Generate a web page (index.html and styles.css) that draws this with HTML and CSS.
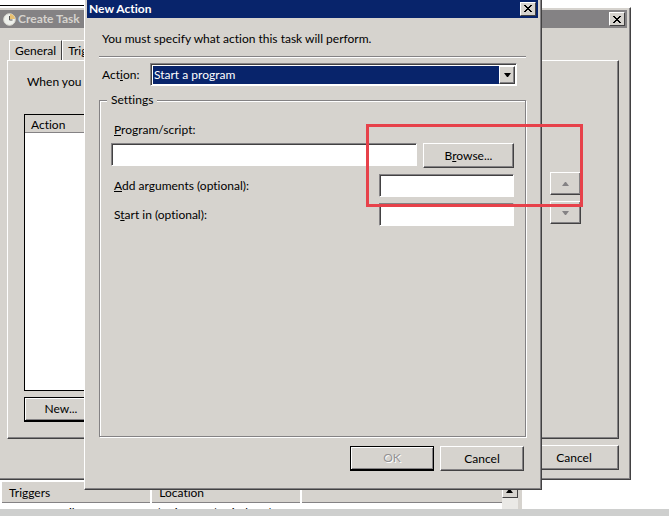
FILE: index.html
```html
<!DOCTYPE html>
<html lang="en">
<head>
    <meta charset="UTF-8">
    <meta name="viewport" content="width=device-width, initial-scale=1.0">
    <title>Create Task</title>
    <link rel="stylesheet" href="styles.css">
</head>
<body>
    <div class="desktop">
        <div class="top-line"></div>

        <!-- Task library list under the windows -->
        <div class="library">
            <table class="task-table">
                <thead>
                    <tr><th>Triggers</th><th>Location</th><th></th></tr>
                </thead>
                <tbody>
                    <tr><td>Consumer files</td><td>\Microsoft\Windows\Power</td><td></td></tr>
                </tbody>
            </table>
            <div class="scrollbar">
                <button class="scroll-up" type="button" aria-label="Scroll up">
                    <svg width="7" height="4" viewBox="0 0 7 4"><path d="M3 0h1l3 4H0z"/></svg>
                </button>
            </div>
        </div>
        <div class="status"></div>

        <!-- Create Task window -->
        <section class="window task-window">
            <header class="titlebar inactive">
                <svg class="clock" width="13" height="13" viewBox="0 0 13 13">
                    <circle cx="6.5" cy="6.5" r="5.8" fill="#eef0ec" stroke="#d8d8d0"/>
                    <path d="M7 6V1A5 5 0 0 1 12 6z" fill="#e8c070"/>
                    <path d="M6.5 3v4h3" fill="none" stroke="#555"/>
                </svg>
                <h1>Create Task</h1>
                <button class="close" type="button" aria-label="Close">
                    <svg width="8" height="7" viewBox="0 0 8 7"><path d="M0 0l7 7M1 0l7 7M7 0l-7 7M8 0l-7 7" stroke="#000"/></svg>
                </button>
            </header>
            <nav class="tabs">
                <button class="tab" type="button">General</button>
                <button class="tab" type="button">Triggers</button>
            </nav>
            <div class="panel">
                <p>When you create a task, you must specify the action.</p>
                <div class="panel-row">
                    <div class="action-list">
                        <div class="action-head">Action</div>
                    </div>
                    <div class="movers">
                        <button class="btn mover" type="button" aria-label="Move up">
                            <svg width="7" height="4" viewBox="0 0 7 4"><path d="M3 0h1l3 4H0z"/></svg>
                        </button>
                        <button class="btn mover" type="button" aria-label="Move down">
                            <svg width="7" height="4" viewBox="0 0 7 4"><path d="M0 0h7L4 4H3z"/></svg>
                        </button>
                    </div>
                </div>
                <button class="btn default" type="button">New...</button>
            </div>
            <footer class="task-footer">
                <button class="btn" type="button">Cancel</button>
            </footer>
        </section>

        <!-- New Action dialog -->
        <section class="window action-window">
            <header class="titlebar">
                <h2>New Action</h2>
                <button class="close" type="button" aria-label="Close">
                    <svg width="8" height="7" viewBox="0 0 8 7"><path d="M0 0l7 7M1 0l7 7M7 0l-7 7M8 0l-7 7" stroke="#000"/></svg>
                </button>
            </header>
            <form class="dialog-body">
                <p class="intro">You must specify what action this task will perform.</p>
                <div class="action-row">
                    <label for="action">Act<u>i</u>on:</label>
                    <div class="select-box">
                        <select id="action">
                            <option>Start a program</option>
                        </select>
                        <span class="drop">
                            <svg width="7" height="4" viewBox="0 0 7 4"><path d="M0 0h7L4 4H3z"/></svg>
                        </span>
                    </div>
                </div>
                <fieldset class="settings">
                    <legend>Settings</legend>
                    <label class="program-label" for="program"><u>P</u>rogram/script:</label>
                    <div class="program-row">
                        <input id="program" type="text">
                        <button class="btn" type="button">B<u>r</u>owse...</button>
                    </div>
                    <div class="field-row">
                        <label for="arguments"><u>A</u>dd arguments (optional):</label>
                        <input id="arguments" type="text">
                    </div>
                    <div class="field-row">
                        <label for="start-in">S<u>t</u>art in (optional):</label>
                        <input id="start-in" type="text">
                    </div>
                </fieldset>
                <div class="dialog-footer">
                    <button class="btn default" type="button" disabled>OK</button>
                    <button class="btn" type="button">Cancel</button>
                </div>
            </form>
        </section>

        <div class="highlight"></div>
    </div>
</body>
</html>
```
FILE: styles.css
```css
* {
    box-sizing: border-box;
}
body {
    margin: 0;
    font-family: Lato, sans-serif;
    font-size: 12px;
    line-height: 16px;
    font-variant-ligatures: none;
    color: #000;
    background: #fff;
}
h1, h2, p {
    margin: 0;
}
button, input, select {
    font: inherit;
    color: inherit;
}
.desktop {
    position: relative;
    display: flex;
    flex-direction: column;
    min-height: 100vh;
    overflow: hidden;
}
.top-line {
    height: 6px;
    border-bottom: 1px solid #000;
    width: 13%;
}

/* windows */
.window {
    position: absolute;
    padding: 2px 3px 3px 2px;
    background: #d6d3ce;
    border: 1px solid #fff;
    border-right-color: #424142;
    border-bottom-color: #424142;
    box-shadow: inset -1px -1px #848284;
}
.task-window {
    top: 7px;
    left: -4px;
    right: 38px;
}
.action-window {
    top: -4px;
    left: 84px;
    right: 127px;
}
.titlebar {
    display: flex;
    align-items: center;
    height: 18px;
    padding: 0 2px;
    background: #08246b;
    color: #fff;
}
.titlebar.inactive {
    background: #848284;
    color: #d6d3ce;
    padding-left: 4px;
}
.titlebar h1, .titlebar h2 {
    flex: 1;
    font-size: 12px;
    font-weight: bold;
}
.action-window .titlebar {
    height: 19px;
}
.clock {
    margin-right: 2px;
}
.close {
    display: flex;
    align-items: center;
    justify-content: center;
    width: 16px;
    height: 14px;
    padding: 0;
    background: #d6d3ce;
    border: 1px solid #fff;
    border-right-color: #424142;
    border-bottom-color: #424142;
}
.btn {
    height: 25px;
    min-width: 84px;
    padding: 0;
    background: #d6d3ce;
    border: 1px solid #fff;
    border-right-color: #424142;
    border-bottom-color: #424142;
    box-shadow: inset -1px -1px #848284;
}
.btn.default {
    border: 1px solid #000;
    border-bottom-width: 2px;
    box-shadow: inset 1px 1px #fff, inset -1px -1px #848284;
}
.btn:disabled {
    color: #949294;
    text-shadow: 1px 1px #fff;
}

/* Create Task window */
.tabs {
    display: flex;
    padding: 12px 0 0 10px;
}
.tab {
    height: 20px;
    padding: 0 5px;
    background: #d6d3ce;
    border: 1px solid #fff;
    border-right-color: #424142;
    border-bottom: 0;
}
.panel {
    margin: 0 8px;
    padding: 13px 37px 16px 16px;
    border: 1px solid #fff;
    border-right-color: #424142;
    border-bottom-color: #424142;
    box-shadow: inset -1px -1px #848284;
}
.panel p {
    padding-left: 3px;
}
.panel-row {
    display: flex;
    gap: 24px;
    margin: 24px 0 6px;
}
.action-list {
    flex: 1;
    height: 277px;
    background: #fff;
    border: 1px solid #000;
}
.action-head {
    height: 18px;
    padding-left: 6px;
    line-height: 20px;
    background: #d6d3ce;
    border-bottom: 1px solid #848284;
}
.movers {
    display: flex;
    flex-direction: column;
    gap: 6px;
    padding-top: 58px;
}
.mover {
    min-width: 31px;
    height: 23px;
    display: flex;
    align-items: center;
    justify-content: center;
}
.mover svg {
    fill: #848284;
}
.panel > .btn {
    min-width: 74px;
}
.task-footer {
    display: flex;
    justify-content: flex-end;
    padding: 6px 8px;
}
.task-footer .btn {
    min-width: 90px;
}

/* New Action dialog */
.dialog-body {
    padding: 13px 12px 15px;
}
.intro {
    padding: 0 0 9px 3px;
    border-bottom: 1px solid #848284;
    box-shadow: 0 1px #fff;
}
.action-row {
    display: flex;
    align-items: center;
    padding: 6px 9px 6px 3px;
}
.action-row label {
    width: 48px;
}
.select-box {
    display: flex;
    flex: 1;
    height: 23px;
    padding: 2px 1px 1px 2px;
    background: #fff;
    border: 1px solid #848284;
    border-right-color: #fff;
    border-bottom-color: #fff;
    box-shadow: inset 1px 1px #424142;
}
.select-box select {
    flex: 1;
    appearance: none;
    padding: 0 1px;
    border: 0;
    border-radius: 0;
    background: #08246b;
    color: #fff;
}
.drop {
    display: flex;
    align-items: center;
    justify-content: center;
    width: 16px;
    background: #d6d3ce;
    border: 1px solid #fff;
    border-right-color: #424142;
    border-bottom-color: #424142;
    box-shadow: inset -1px -1px #848284;
    pointer-events: none;
}
.settings {
    margin: 0;
    min-width: 0;
    height: 345px;
    padding: 14px 11px 0;
    border: 1px solid #848284;
    box-shadow: inset 1px 1px #fff, 1px 1px #fff;
}
.settings legend {
    margin-left: -4px;
    padding: 0 4px;
    background: #d6d3ce;
}
.settings label {
    padding-left: 3px;
}
.program-label {
    display: block;
}
.program-row {
    display: flex;
    align-items: flex-start;
    gap: 6px;
    margin: 5px 0 6px;
}
.program-row .btn {
    min-width: 91px;
}
input {
    height: 23px;
    padding: 0 3px;
    background: #fff;
    border: 1px solid #848284;
    border-right-color: #fff;
    border-bottom-color: #fff;
    border-radius: 0;
    box-shadow: inset 1px 1px #424142;
}
.program-row input {
    flex: 1;
    min-width: 0;
}
.field-row {
    display: flex;
    align-items: center;
    justify-content: space-between;
    margin-bottom: 6px;
}
.field-row input {
    width: 135px;
}
.dialog-footer {
    display: flex;
    justify-content: flex-end;
    gap: 6px;
    padding: 9px 2px 0 0;
}

/* task library */
.library {
    display: flex;
    width: 78%;
    height: 27px;
    margin-top: auto;
    overflow: hidden;
    border-right: 4px solid #d6d3ce;
}
.task-table {
    flex: 1;
    width: 100%;
    table-layout: fixed;
    border-collapse: collapse;
}
.task-table th {
    height: 20px;
    padding: 3px 7px 0;
    font-weight: normal;
    text-align: left;
    background: #d6d3ce;
    border-left: 2px solid #fff;
    border-bottom: 1px solid #848284;
}
.task-table td {
    padding: 2px 7px;
    white-space: nowrap;
}
.task-table th:nth-child(-n+2) {
    width: 30%;
}
.scrollbar {
    width: 16px;
    background: #eae9e6;
}
.scroll-up {
    display: flex;
    align-items: center;
    justify-content: center;
    width: 16px;
    height: 16px;
    padding: 2px 0 0;
    background: #d6d3ce;
    border: 1px solid #fff;
    border-right-color: #424142;
    border-bottom-color: #424142;
}
.status {
    height: 7px;
    background: #cecfce;
}

/* red frame around the arguments field */
.highlight {
    position: absolute;
    top: 124px;
    left: 366px;
    right: 86px;
    height: 83px;
    border: 3px solid #e7414a;
    pointer-events: none;
}
```
